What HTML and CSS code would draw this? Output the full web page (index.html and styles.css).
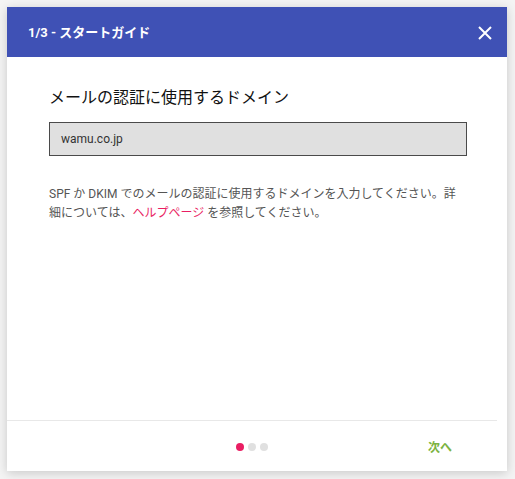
FILE: index.html
```html
<!DOCTYPE html>
<html lang="ja">
<head>
<meta charset="utf-8">
<title>スタートガイド</title>
<link rel="stylesheet" href="styles.css">
</head>
<body>
<div class="dialog">
  <header class="dialog-header">
    <span class="dialog-title">1/3 - スタートガイド</span>
    <button class="close-btn" aria-label="閉じる">
      <svg width="14" height="14" viewBox="0 0 14 14"><path d="M1 1L13 13M13 1L1 13" stroke="#fff" stroke-width="2" fill="none"/></svg>
    </button>
  </header>
  <main class="dialog-body">
    <h2 class="field-title">メールの認証に使用するドメイン</h2>
    <div class="input-box">wamu.co.jp</div>
    <p class="help-text">SPF か DKIM でのメールの認証に使用するドメインを入力してください。詳細については、<a class="help-link" href="#">ヘルプページ</a> を参照してください。</p>
  </main>
  <footer class="dialog-footer">
    <div class="footer-side"></div>
    <div class="dots">
      <span class="dot dot-active"></span>
      <span class="dot"></span>
      <span class="dot"></span>
    </div>
    <div class="footer-side footer-right">
      <button class="next-btn">次へ</button>
    </div>
  </footer>
</div>
</body>
</html>
```

FILE: styles.css
```css
html, body {
  margin: 0;
  padding: 0;
  background: #f4f4f4;
}
body {
  font-family: Roboto, "Noto Sans CJK JP", sans-serif;
  padding: 7px 8px 8px 7px;
}
.dialog {
  width: 500px;
  height: 464px;
  background: #fff;
  box-shadow: 0 2px 10px rgba(0,0,0,0.18);
  display: flex;
  flex-direction: column;
}
.dialog-header {
  height: 50px;
  background: #3f51b5;
  display: flex;
  align-items: center;
  justify-content: space-between;
  padding: 0 15px 0 21px;
  flex-shrink: 0;
}
.dialog-title {
  color: #fff;
  font-size: 13px;
  font-weight: 700;
  margin-top: -2px;
}
.close-btn {
  background: none;
  border: 0;
  padding: 0;
  width: 14px;
  height: 14px;
  display: flex;
  margin-top: 1px;
}
.dialog-body {
  flex: 1;
  padding: 31px 40px 0 42px;
}
.field-title {
  margin: 0;
  font-size: 16px;
  font-weight: 400;
  color: #111;
  line-height: 20px;
}
.input-box {
  margin-top: 14px;
  height: 32px;
  border: 1px solid #4a4a4a;
  background: #e0e0e0;
  box-sizing: content-box;
  display: flex;
  align-items: center;
  padding-left: 11px;
  font-size: 12px;
  color: #333;
}
.help-text {
  margin: 29px 0 0;
  font-size: 12px;
  line-height: 19px;
  color: #555;
}
.help-link {
  color: #e91e63;
  text-decoration: none;
}
.dialog-footer {
  height: 50px;
  border-top: 1px solid #e8e8e8;
  margin-right: 10px;
  display: grid;
  grid-template-columns: 1fr auto 1fr;
  align-items: center;
  flex-shrink: 0;
}
.footer-right {
  display: flex;
  justify-content: flex-end;
  padding-right: 45px;
}
.dots {
  display: flex;
  gap: 4px;
  margin-top: 1px;
}
.dot {
  width: 8px;
  height: 8px;
  border-radius: 50%;
  background: #e0e0e0;
}
.dot-active {
  background: #e91e63;
}
.next-btn {
  background: none;
  border: 0;
  padding: 0;
  font-family: inherit;
  font-size: 12px;
  font-weight: 700;
  color: #7cb342;
}
```
